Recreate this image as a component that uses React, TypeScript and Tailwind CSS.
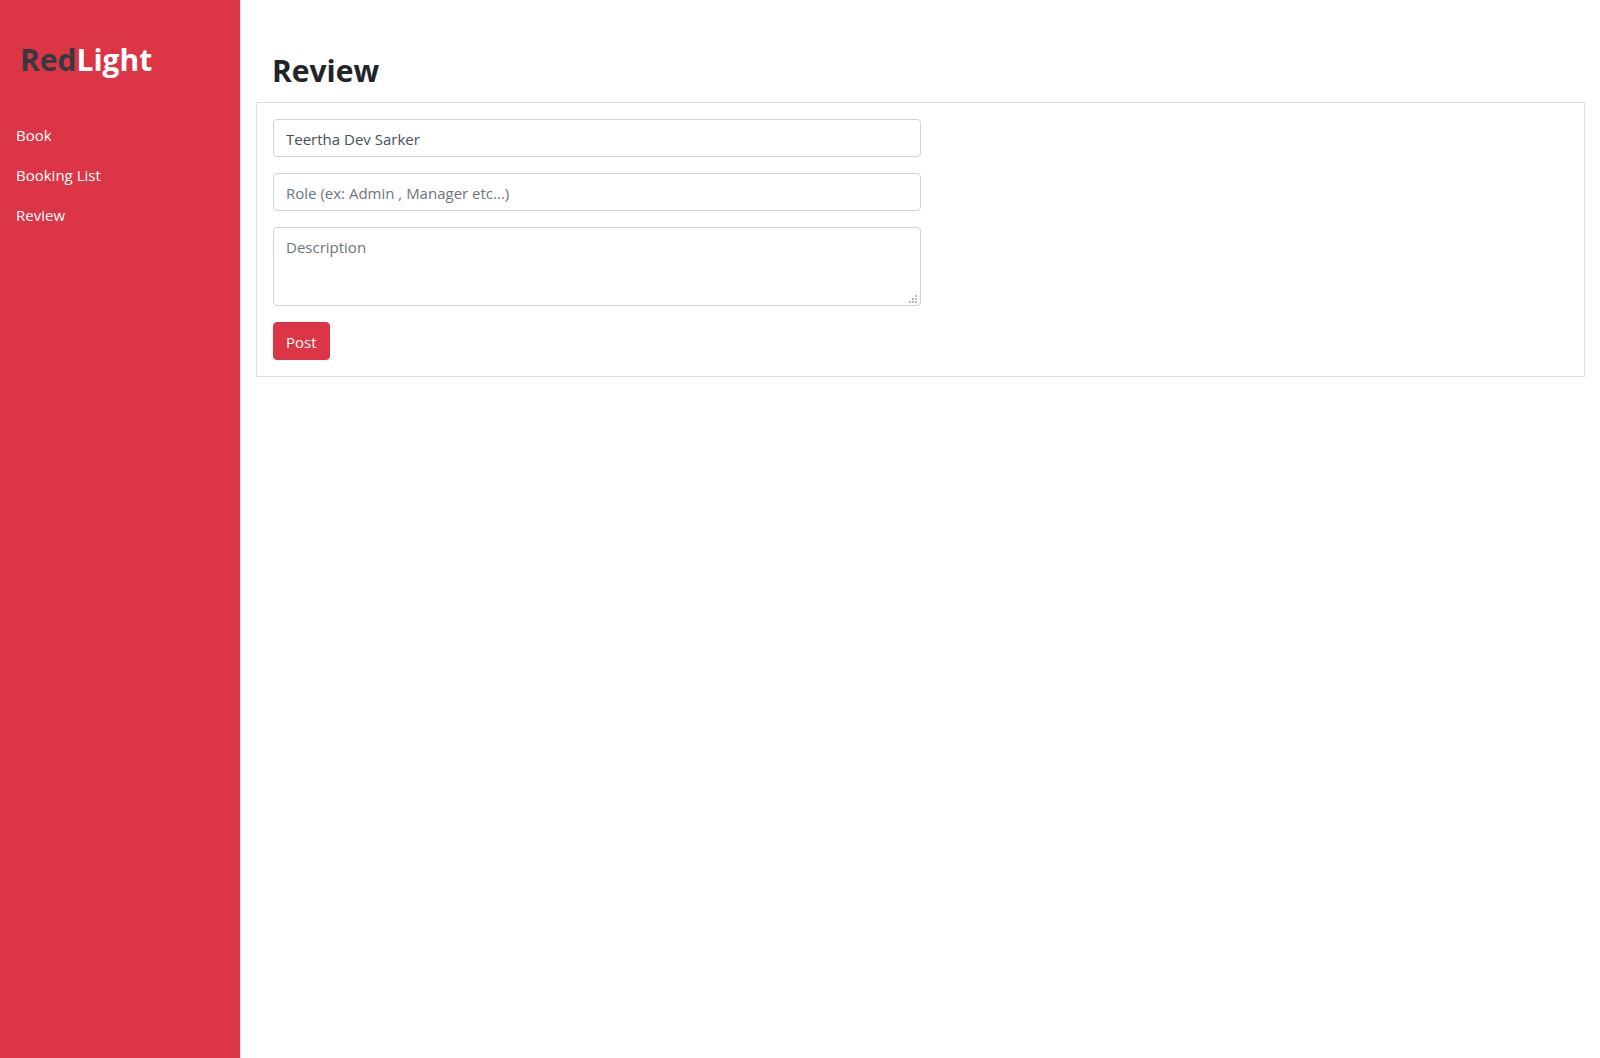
import React from 'react';

const links = ['Book', 'Booking List', 'Review'];

const field =
  'block w-full rounded-[4px] border border-[#ced4da] bg-white px-3 pt-[7px] pb-[5px] text-[15px] leading-6 text-[#495057] placeholder:text-[#6c757d] focus:outline-none focus:border-[#80bdff]';

function ResizeGrip() {
  return (
    <svg className="pointer-events-none absolute right-1 bottom-[3px] size-2" viewBox="0 0 8 8" fill="#b8b8b8" aria-hidden="true">
      <path d="M6 0h2v2H6zM3 3h2v2H3zM6 3h2v2H6zM0 6h2v2H0zM3 6h2v2H3zM6 6h2v2H6z" />
    </svg>
  );
}

export default function App() {
  return (
    <div className="flex min-h-screen bg-white font-['Open_Sans',sans-serif] text-[15px] leading-6 text-[#212529]">
      <aside className="w-60 shrink-0 bg-[#dc3545] text-white">
        <a href="#" className="mt-9 ml-5 block text-[30px] leading-12 font-bold">
          <span className="text-[#343a40]">Red</span>Light
        </a>
        <nav className="mt-[31px]">
          <ul>
            {links.map((label) => (
              <li key={label}>
                <a href="#" className="block px-4 py-2 hover:underline">{label}</a>
              </li>
            ))}
          </ul>
        </nav>
      </aside>
      <main className="min-w-0 grow border-l border-[#dee2e6] px-[15px] pt-12">
        <h1 className="mb-2 px-4 text-[30px] leading-[46px] font-bold">Review</h1>
        <form className="border border-[#dee2e6] p-4" onSubmit={(e) => e.preventDefault()}>
          <div className="flex w-1/2 flex-col gap-4">
            <input type="text" aria-label="Name" className={field} defaultValue="Teertha Dev Sarker" />
            <input type="text" aria-label="Role" className={field} placeholder="Role (ex: Admin , Manager etc...)" />
            <div className="relative">
              <textarea
                aria-label="Description"
                className={`${field} h-[79px] resize-y [&::-webkit-resizer]:bg-transparent`}
                placeholder="Description"
              />
              <ResizeGrip />
            </div>
            <button type="submit" className="self-start rounded-[4px] border border-[#dc3545] bg-[#dc3545] px-3 pt-[7px] pb-[5px] text-white">
              Post
            </button>
          </div>
        </form>
      </main>
    </div>
  );
}
